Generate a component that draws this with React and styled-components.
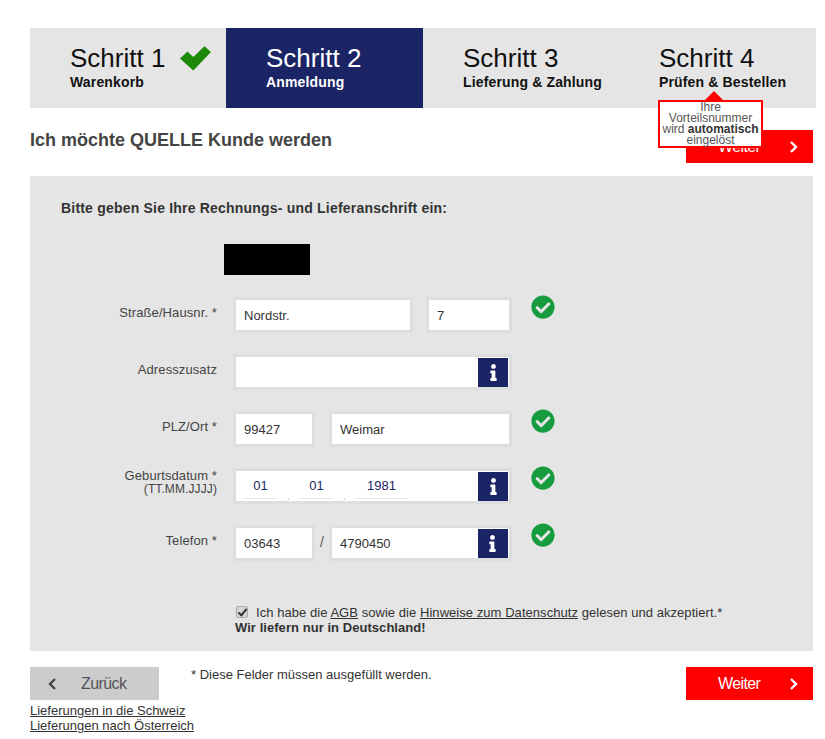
import styled, { createGlobalStyle } from "styled-components";
import { FaCheckCircle, FaInfo } from "react-icons/fa";

const GlobalStyle = createGlobalStyle`
  html, body {
    margin: 0;
    padding: 0;
    background: #fff;
    font-family: "Liberation Sans", Arial, sans-serif;
    color: #333;
  }
`;

const Page = styled.div`
  width: 783px;
  padding: 28px 0 0 30px;
`;

const Stepper = styled.div`
  display: grid;
  grid-template-columns: 196px 197px 196px 197px;
  width: 786px;
  height: 80px;
  background: #e5e5e5;
`;

const Step = styled.div`
  position: relative;
  box-sizing: border-box;
  padding: 14px 0 0 40px;
  background: ${(p) => (p.$active ? "#1b2464" : "transparent")};
  color: ${(p) => (p.$active ? "#fff" : "#111")};
`;

const StepTitle = styled.div`
  display: flex;
  align-items: center;
  height: 32px;
  font-size: 26px;
  line-height: 32px;
`;

const StepName = styled.div`
  font-size: 14px;
  line-height: 18px;
  margin-top: -1px;
  font-weight: bold;
  letter-spacing: 0.15px;
  white-space: nowrap;
`;

const DoneMark = styled.svg`
  width: 31px;
  height: 25px;
  margin-left: 15px;
  fill: #1c8a08;
`;

const Tip = styled.div`
  position: absolute;
  z-index: 2;
  left: 39px;
  top: 72px;
  box-sizing: border-box;
  width: 105px;
  height: 48px;
  border: 2px solid #f00;
  background: #fff;
  color: #555;
  font-size: 12px;
  line-height: 11px;
  text-align: center;

  &::before {
    content: "";
    position: absolute;
    left: 45px;
    top: -11px;
    border: 9px solid transparent;
    border-top: 0;
    border-bottom: 9px solid #f00;
  }

  b {
    color: #333;
  }
`;

const HeadRow = styled.div`
  display: flex;
  justify-content: space-between;
  align-items: flex-start;
  margin-top: 22px;
`;

const Heading = styled.h1`
  margin: 0;
  font-size: 18px;
  line-height: 20px;
  font-weight: bold;
  color: #444;
`;

const NavButton = styled.button`
  display: flex;
  align-items: center;
  box-sizing: border-box;
  height: 33px;
  width: ${(p) => (p.$back ? "129px" : "127px")};
  padding: 0;
  border: 0;
  font-family: inherit;
  font-size: 16px;
  letter-spacing: -0.6px;
  background: ${(p) => (p.$back ? "#ccc" : "#f00")};
  color: ${(p) => (p.$back ? "#555" : "#fff")};
`;

const NextLabel = styled.span`
  margin-left: 32px;
  width: 71px;
  text-align: left;
`;

const BackLabel = styled.span`
  margin-left: 24px;
`;

const Chevron = styled.svg`
  width: 9px;
  height: 12px;
  fill: none;
  stroke-width: 2.4;
  stroke: currentColor;
`;

const BackChevron = styled(Chevron)`
  margin-left: 18px;
  color: #444;
`;

const Panel = styled.div`
  margin-top: 13px;
  padding: 24px 0 16px;
  background: #e5e5e5;
`;

const PanelTitle = styled.h2`
  margin: 0 0 0 31px;
  font-size: 14px;
  line-height: 16px;
  font-weight: bold;
  letter-spacing: 0.2px;
  color: #333;
`;

const Redacted = styled.div`
  width: 86px;
  height: 31px;
  margin: 28px 0 22px 194px;
  background: #000;
`;

const Rows = styled.div`
  display: flex;
  flex-direction: column;
  gap: 21px;
`;

const Row = styled.div`
  display: flex;
  height: 36px;
`;

const Label = styled.label`
  flex: 0 0 187px;
  margin-right: 16px;
  padding-top: ${(p) => (p.$double ? "0" : "8px")};
  font-size: 13px;
  line-height: 15px;
  letter-spacing: 0.1px;
  text-align: right;
  color: #444;

  small {
    display: block;
    font-size: 12px;
    line-height: 13px;
  }
`;

const Fields = styled.div`
  display: flex;
  flex: 0 0 279px;
  justify-content: space-between;
  align-items: stretch;
`;

const Box = styled.div`
  display: flex;
  box-sizing: border-box;
  width: ${(p) => p.$width}px;
  height: 36px;
  border: 3px solid #dedede;
  background: #fff;
`;

const TextInput = styled.input`
  flex: 1;
  min-width: 0;
  box-sizing: border-box;
  padding: 0 0 0 8px;
  border: 0;
  outline: 0;
  background: transparent;
  font-family: inherit;
  font-size: 13px;
  color: #333;
`;

const DateInputs = styled.div`
  display: flex;
  flex: 1;
  padding-left: 8px;
`;

const DatePart = styled.input`
  box-sizing: border-box;
  width: ${(p) => p.$width}px;
  height: 28px;
  padding: 1px 0 0;
  border: 0;
  border-bottom: 1px solid #e8e8e8;
  outline: 0;
  background: transparent;
  text-align: center;
  font-family: inherit;
  font-size: 13px;
  color: #1b2464;
`;

const DateDot = styled.span`
  width: 23px;
  padding-top: 17px;
  text-align: center;
  font-size: 14px;
  line-height: 14px;
  color: #ccc;
`;

const InfoButton = styled.span`
  display: flex;
  align-items: center;
  justify-content: center;
  flex: 0 0 30px;
  height: 29px;
  margin: 1px 1px 0 0;
  background: #1b2464;
  color: #fff;
  font-size: 17px;
`;

const Slash = styled.span`
  align-self: center;
  margin-top: -3px;
  font-size: 14px;
  color: #555;
`;

const Valid = styled(FaCheckCircle)`
  margin: -2px 0 0 19px;
  font-size: 24px;
  color: #169b3e;
`;

const Consent = styled.div`
  margin: 44px 0 0 205px;
  font-size: 13px;
  line-height: 15px;
  letter-spacing: 0.05px;
  color: #333;

  a {
    color: inherit;
  }

  strong {
    display: block;
  }
`;

const Tick = styled.input`
  appearance: none;
  position: relative;
  box-sizing: border-box;
  width: 12px;
  height: 12px;
  margin: 0 8px 0 1px;
  vertical-align: -1px;
  border: 1px solid #aaa;
  border-radius: 2px;
  background: #d6d6d6;

  &::after {
    content: "";
    position: absolute;
    left: 3px;
    top: 0;
    width: 3px;
    height: 7px;
    border: solid #333;
    border-width: 0 2px 2px 0;
    transform: rotate(40deg);
  }
`;

const Footer = styled.div`
  display: flex;
  margin-top: 16px;
`;

const LeftColumn = styled.div`
  flex: 0 0 129px;
  min-width: 0;
`;

const Links = styled.div`
  margin-top: 3px;
  font-size: 13px;
  line-height: 15px;

  a {
    display: block;
    color: #333;
    white-space: nowrap;
  }
`;

const Note = styled.p`
  flex: 1;
  margin: 0 0 0 32px;
  font-size: 13px;
  line-height: 15px;
  color: #333;
`;

const next = (
  <NavButton>
    <NextLabel>Weiter</NextLabel>
    <Chevron viewBox="0 0 9 12"><polyline points="2,1 7,6 2,11" /></Chevron>
  </NavButton>
);

const noop = () => {};

const App = () => {
  return (
    <>
      <GlobalStyle />
      <Page>
        <Stepper>
          <Step>
            <StepTitle>
              Schritt 1
              <DoneMark viewBox="0 0 31 25"><polygon points="0,12.5 7.5,5.5 13.3,11 24.5,0.3 31,6 13.3,24.5" /></DoneMark>
            </StepTitle>
            <StepName>Warenkorb</StepName>
          </Step>
          <Step $active>
            <StepTitle>Schritt 2</StepTitle>
            <StepName>Anmeldung</StepName>
          </Step>
          <Step>
            <StepTitle>Schritt 3</StepTitle>
            <StepName>Lieferung &amp; Zahlung</StepName>
          </Step>
          <Step>
            <StepTitle>Schritt 4</StepTitle>
            <StepName>Prüfen &amp; Bestellen</StepName>
            <Tip>Ihre Vorteilsnummer wird <b>automatisch</b> eingelöst</Tip>
          </Step>
        </Stepper>

        <HeadRow>
          <Heading>Ich möchte QUELLE Kunde werden</Heading>
          {next}
        </HeadRow>

        <Panel>
          <PanelTitle>Bitte geben Sie Ihre Rechnungs- und Lieferanschrift ein:</PanelTitle>
          <Redacted />
          <Rows>
            <Row>
              <Label>Straße/Hausnr. *</Label>
              <Fields>
                <Box $width={180}><TextInput readOnly value="Nordstr." /></Box>
                <Box $width={86}><TextInput readOnly value="7" /></Box>
              </Fields>
              <Valid />
            </Row>
            <Row>
              <Label>Adresszusatz</Label>
              <Fields>
                <Box $width={279}>
                  <TextInput readOnly value="" />
                  <InfoButton><FaInfo /></InfoButton>
                </Box>
              </Fields>
            </Row>
            <Row>
              <Label>PLZ/Ort *</Label>
              <Fields>
                <Box $width={82}><TextInput readOnly value="99427" /></Box>
                <Box $width={183}><TextInput readOnly value="Weimar" /></Box>
              </Fields>
              <Valid />
            </Row>
            <Row>
              <Label $double>Geburtsdatum *<small>(TT.MM.JJJJ)</small></Label>
              <Fields>
                <Box $width={279}>
                  <DateInputs>
                    <DatePart $width={33} readOnly value="01" />
                    <DateDot>.</DateDot>
                    <DatePart $width={33} readOnly value="01" />
                    <DateDot>.</DateDot>
                    <DatePart $width={51} readOnly value="1981" />
                  </DateInputs>
                  <InfoButton><FaInfo /></InfoButton>
                </Box>
              </Fields>
              <Valid />
            </Row>
            <Row>
              <Label>Telefon *</Label>
              <Fields>
                <Box $width={82}><TextInput readOnly value="03643" /></Box>
                <Slash>/</Slash>
                <Box $width={183}>
                  <TextInput readOnly value="4790450" />
                  <InfoButton><FaInfo /></InfoButton>
                </Box>
              </Fields>
              <Valid />
            </Row>
          </Rows>
          <Consent>
            <Tick type="checkbox" checked onChange={noop} />
            Ich habe die <a href="#agb">AGB</a> sowie die <a href="#datenschutz">Hinweise zum Datenschutz</a> gelesen und akzeptiert.*
            <strong>Wir liefern nur in Deutschland!</strong>
          </Consent>
        </Panel>

        <Footer>
          <LeftColumn>
            <NavButton $back>
              <BackChevron viewBox="0 0 9 12"><polyline points="7,1 2,6 7,11" /></BackChevron>
              <BackLabel>Zurück</BackLabel>
            </NavButton>
            <Links>
              <a href="#ch">Lieferungen in die Schweiz</a>
              <a href="#at">Lieferungen nach Österreich</a>
            </Links>
          </LeftColumn>
          <Note>* Diese Felder müssen ausgefüllt werden.</Note>
          {next}
        </Footer>
      </Page>
    </>
  );
};

export default App;
